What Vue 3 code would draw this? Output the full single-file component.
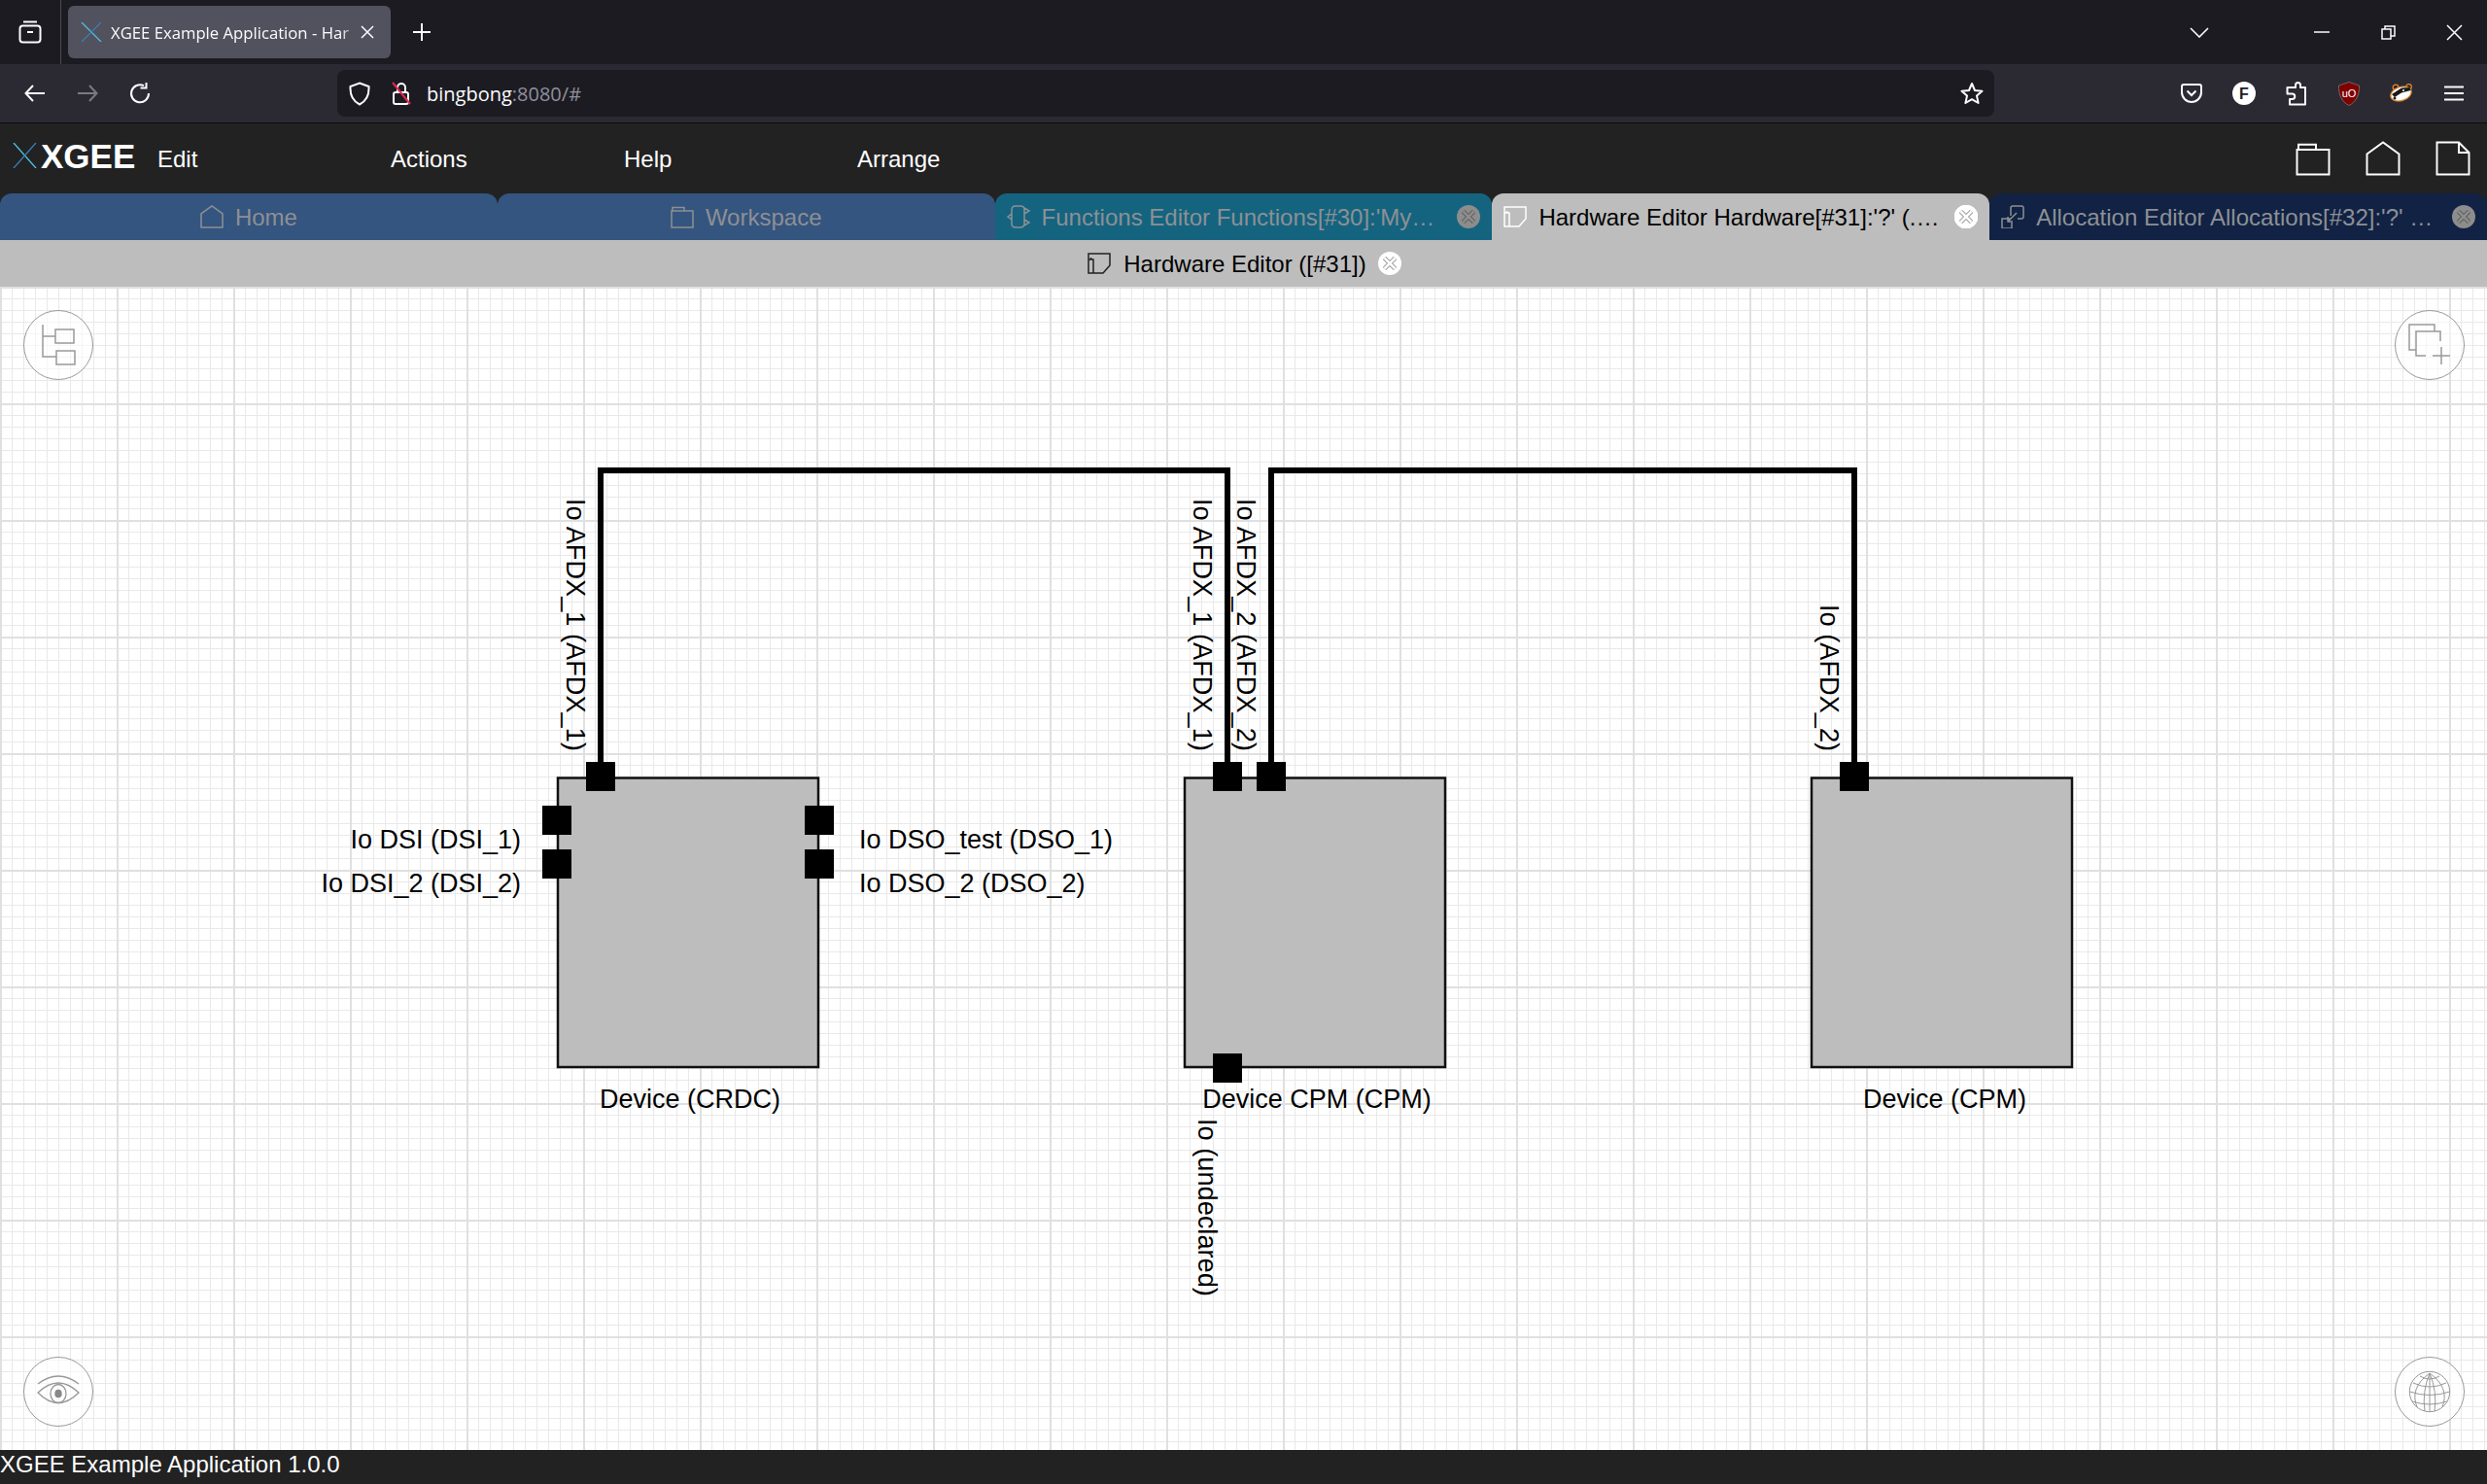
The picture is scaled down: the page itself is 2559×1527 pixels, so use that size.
<template>
  <div class="page">
    <!-- browser chrome: tab strip -->
    <div class="tabstrip">
      <div class="tablist-btn">
        <svg width="24" height="24" viewBox="0 0 24 24" fill="none" stroke="#fbfbfe" stroke-width="2">
          <path d="M5 1.5H19" />
          <rect x="1.5" y="5.5" width="21" height="17" rx="3" />
          <path d="M9 12H15" />
        </svg>
      </div>
      <div class="browser-tab">
        <svg class="favicon" width="22" height="20" viewBox="0 0 22 20" fill="none" stroke-width="1.2">
          <path d="M1 0L21 20" stroke="#4fc3e8" />
          <path d="M21 0L1 20" stroke="#3a7fb5" />
        </svg>
        <span class="browser-tab-title">XGEE Example Application - Har</span>
        <svg width="14" height="14" viewBox="0 0 14 14" stroke="#fbfbfe" stroke-width="1.5">
          <path d="M1 1L13 13M13 1L1 13" />
        </svg>
      </div>
      <div class="newtab-btn">
        <svg width="20" height="20" viewBox="0 0 20 20" stroke="#fbfbfe" stroke-width="2">
          <path d="M10 1V19M1 10H19" />
        </svg>
      </div>
      <div class="chevron-btn">
        <svg width="20" height="11" viewBox="0 0 20 11" fill="none" stroke="#fbfbfe" stroke-width="1.6">
          <path d="M1 1L10 10L19 1" />
        </svg>
      </div>
      <div class="window-btn">
        <svg width="16" height="2" viewBox="0 0 16 2" stroke="#fbfbfe" stroke-width="1.5"><path d="M0 1H16" /></svg>
      </div>
      <div class="window-btn">
        <svg width="15" height="15" viewBox="0 0 15 15" fill="none" stroke="#fbfbfe" stroke-width="1.5">
          <rect x="1" y="4" width="9" height="10" />
          <path d="M4 4V1H14V11H10" />
        </svg>
      </div>
      <div class="window-btn">
        <svg width="17" height="17" viewBox="0 0 17 17" stroke="#fbfbfe" stroke-width="1.5">
          <path d="M1 1L16 16M16 1L1 16" />
        </svg>
      </div>
    </div>

    <!-- browser chrome: url row -->
    <div class="toolbar">
      <div class="tool-btn">
        <svg width="22" height="18" viewBox="0 0 22 18" fill="none" stroke="#fbfbfe" stroke-width="2">
          <path d="M21 9H2M9 1L1.5 9L9 17" />
        </svg>
      </div>
      <div class="tool-btn">
        <svg width="22" height="18" viewBox="0 0 22 18" fill="none" stroke="#7b7a82" stroke-width="2">
          <path d="M1 9H20M13 1L20.5 9L13 17" />
        </svg>
      </div>
      <div class="tool-btn">
        <svg width="22" height="22" viewBox="0 0 22 22" fill="none" stroke="#fbfbfe" stroke-width="2">
          <path d="M15 3.2A9 9 0 1 0 20 11" />
          <path d="M15.5 0V6.5H9.5" fill="none" transform="translate(2 -1)" />
        </svg>
      </div>
      <div class="urlbar">
        <svg class="shield" width="22" height="25" viewBox="0 0 22 25" fill="none" stroke="#fbfbfe" stroke-width="2">
          <path d="M11 1.5L20.5 5C21 14 17 20.5 11 23.5C5 20.5 1 14 1.5 5Z" />
        </svg>
        <svg class="lock" width="20" height="24" viewBox="0 0 20 24" fill="none" stroke-width="2">
          <rect x="2" y="11" width="15" height="12" rx="2" stroke="#fbfbfe" />
          <path d="M6 11V6A4 4 0 0 1 14 6V11" stroke="#fbfbfe" />
          <path d="M1 1L19 23" stroke="#e22850" />
        </svg>
        <span class="url-host">bingbong</span><span class="url-rest">:8080/#</span>
        <svg class="star" width="24" height="24" viewBox="0 0 24 24" fill="none" stroke="#fbfbfe" stroke-width="2" stroke-linejoin="round">
          <path d="M12 2L15 9L22.5 9.7L17 14.6L18.6 22L12 18.2L5.4 22L7 14.6L1.5 9.7L9 9Z" />
        </svg>
      </div>
      <div class="tool-btn">
        <svg width="22" height="20" viewBox="0 0 22 20" fill="none" stroke="#fbfbfe" stroke-width="2">
          <path d="M3 1H19Q21 1 21 3V9A10 10 0 0 1 1 9V3Q1 1 3 1Z" />
          <path d="M6.5 7.5L11 12L15.5 7.5" />
        </svg>
      </div>
      <div class="tool-btn">
        <svg width="24" height="24" viewBox="0 0 24 24">
          <circle cx="12" cy="12" r="12" fill="#fff" />
          <text x="12" y="18" class="badge-f" text-anchor="middle">F</text>
        </svg>
      </div>
      <div class="tool-btn">
        <svg width="22" height="25" viewBox="0 0 22 25" fill="none" stroke="#fbfbfe" stroke-width="2" stroke-linejoin="round">
          <path d="M10 6V3.5A2.5 2.5 0 0 1 15 3.5V6H20V23.5H4V18H6.5A2.7 2.7 0 0 0 6.5 12.500H1.500V6Z" />
        </svg>
      </div>
      <div class="tool-btn">
        <svg width="22" height="25" viewBox="0 0 22 25">
          <path d="M11 0.5L21.500 4C22 14 18 21 11 24.500C4 21 0 14 0.500 4Z" fill="#800000" stroke="#777" stroke-width="0.8" />
          <text x="11" y="16" class="badge-ub" text-anchor="middle">uO</text>
        </svg>
      </div>
      <div class="tool-btn">
        <svg width="25" height="20" viewBox="0 0 25 20">
          <circle cx="7" cy="4" r="2.800" fill="#222" stroke="#e08a30" stroke-width="1.300" />
          <circle cx="20.500" cy="3.500" r="2.800" fill="#222" stroke="#e08a30" stroke-width="1.300" />
          <ellipse cx="12.500" cy="10.500" rx="11" ry="7" fill="#fff" stroke="#e08a30" stroke-width="1.200" transform="rotate(-18 12.500 10.500)" />
          <path d="M3 11L13 4.500L21.500 4L22.500 7L13 9.500L6 14Z" fill="#1a1a1a" />
          <circle cx="15" cy="7" r="1" fill="#fff" />
          <circle cx="6" cy="15" r="1.500" fill="#222" />
        </svg>
      </div>
      <div class="tool-btn">
        <svg width="20" height="16" viewBox="0 0 20 16" stroke="#fbfbfe" stroke-width="2">
          <path d="M0 1.500H20M0 8H20M0 14.500H20" />
        </svg>
      </div>
    </div>

    <!-- application menu -->
    <div class="menu-bar">
      <svg class="logo-x" width="25" height="26" viewBox="0 0 25 26" fill="none" stroke-width="1.3">
        <path d="M1 0L24 26" stroke="#4fc3e8" />
        <path d="M24 0L1 26" stroke="#3a7fb5" />
      </svg>
      <span class="logo-text">XGEE</span>
      <span v-for="item in menuItems" :key="item" class="menu-item">{{ item }}</span>
      <div class="menu-icons">
        <svg v-for="name in ['folder', 'home', 'file']" :key="name" width="36" height="36" viewBox="0 0 24 24" fill="none" stroke="#fff" stroke-width="1.300">
          <path :d="icons[name]" />
        </svg>
      </div>
    </div>

    <!-- editor tabs -->
    <div class="tabs">
      <div v-for="tab in tabs" :key="tab.title" class="tab" :class="tab.cls">
        <svg class="tab-icon" width="24" height="24" viewBox="0 0 24 24" fill="none" stroke="currentColor" stroke-width="1.500">
          <path :d="icons[tab.icon]" />
        </svg>
        <span class="tab-title">{{ tab.title }}</span>
        <svg v-if="tab.closable" class="tab-close" width="24" height="24" viewBox="0 0 24 24">
          <circle cx="12" cy="12" r="12" class="close-bg" />
          <path d="M6.500 6.500L17.500 17.500M17.500 6.500L6.500 17.500" class="close-outer" />
          <path d="M6.500 6.500L17.500 17.500M17.500 6.500L6.500 17.500" class="close-inner" />
        </svg>
      </div>
    </div>

    <!-- panel header -->
    <div class="panel-header">
      <svg class="panel-icon" width="24" height="24" viewBox="0 0 24 24" fill="none" stroke="#222" stroke-width="1.500">
        <path :d="icons.hardware" />
      </svg>
      <span class="panel-title">Hardware Editor ([#31])</span>
      <svg class="panel-close" width="24" height="24" viewBox="0 0 24 24">
        <circle cx="12" cy="12" r="12" fill="#fff" />
        <path d="M6.500 6.500L17.500 17.500M17.500 6.500L6.500 17.500" stroke="#888" stroke-width="4.500" />
        <path d="M6.500 6.500L17.500 17.500M17.500 6.500L6.500 17.500" stroke="#fff" stroke-width="2.800" />
      </svg>
    </div>

    <!-- graph canvas -->
    <div class="canvas">
      <svg class="graph" width="2559" height="1197" viewBox="0 295 2559 1197">
        <path v-for="wire in wires" :key="wire" :d="wire" class="wire" />
        <rect v-for="d in devices" :key="d.label" :x="d.x" y="800.500" width="268" height="297.500" class="device" />
        <rect v-for="p in ports" :key="p.x + '-' + p.y" :x="p.x" :y="p.y" width="30" height="30" class="port" />
        <text v-for="d in devices" :key="d.label" :x="d.labelX" y="1140" class="label" text-anchor="middle">{{ d.label }}</text>
        <text v-for="l in portLabels" :key="l.text" :x="l.x" :y="l.y" class="label" :text-anchor="l.anchor">{{ l.text }}</text>
        <text
          v-for="l in verticalLabels"
          :key="l.text + l.x"
          :x="l.x"
          :y="l.y"
          class="label label-vertical"
          :transform="`rotate(90 ${l.x} ${l.y})`"
        >{{ l.text }}</text>
      </svg>

      <div class="round-btn btn-outline">
        <svg width="72" height="72" viewBox="0 0 72 72" fill="none" stroke="#999" stroke-width="1.500">
          <path d="M20 15V48H34M20 27H33" />
          <rect x="33" y="20" width="19" height="14" />
          <rect x="34" y="42" width="19" height="14" />
        </svg>
      </div>
      <div class="round-btn btn-copy">
        <svg width="72" height="72" viewBox="0 0 72 72" fill="none" stroke="#999" stroke-width="1.500">
          <path d="M22 41H15V15H41V22" />
          <path d="M47 32V22H22V47H32M39 47H57M48 38V56" />
        </svg>
      </div>
      <div class="round-btn btn-eye">
        <svg width="72" height="72" viewBox="0 0 72 72" fill="none" stroke="#999" stroke-width="1.300">
          <path d="M15 28Q36 12 57 28" />
          <path d="M15 37Q36 17 57 37Q36 58 15 37Z" />
          <ellipse cx="36" cy="38" rx="8" ry="9.500" />
          <ellipse cx="36" cy="38" rx="3.700" ry="4.300" fill="#888" stroke="none" />
        </svg>
      </div>
      <div class="round-btn btn-globe">
        <svg width="72" height="72" viewBox="-36 -36 72 72" fill="none" stroke="#999" stroke-width="1">
          <circle r="20.700" />
          <path d="M0 -19V20" />
          <path d="M0 -19Q-8 0 -5 20M0 -19Q8 0 5 20" />
          <path d="M0 -19Q-21 -4 -13 16M0 -19Q21 -4 13 16" />
          <path d="M-10 -16Q0 -10 10 -16M-17 -9Q0 -1 17 -9M-20.500 0Q0 7 20.500 0M-18 10Q0 16 18 10" />
        </svg>
      </div>
    </div>

    <div class="status-bar">XGEE Example Application 1.0.0</div>
  </div>
</template>

<script setup>
const menuItems = ['Edit', 'Actions', 'Help', 'Arrange']

// paths for the small line icons, all on a 24x24 box
const icons = {
  home: 'M1 23V9L12 1L23 9V23Z',
  folder: 'M1 6H23V23H1ZM2 6V2.500H14V6',
  file: 'M1 1H16L23 8V23H1ZM16 1V8H23',
  functions: 'M9 1H14Q18 1 18 5V19Q18 23 14 23H9Q5 23 5 19V5Q5 1 9 1ZM5 9L1 12L5 15M18 3L23 6L18 9M18 15L23 18L18 21',
  hardware: 'M1 2H23V14L16 22H1ZM1 8H6V22M3.500 8V6',
  allocation: 'M10 11V3Q10 1 12 1H21Q23 1 23 3V12Q23 14 21 14H17M10 14H1V24H11V18M16 8L7 17M7 12V17H12',
}

const tabs = [
  { title: 'Home', icon: 'home', cls: 'tab-home' },
  { title: 'Workspace', icon: 'folder', cls: 'tab-home' },
  { title: "Functions Editor Functions[#30]:'My…", icon: 'functions', cls: 'tab-functions', closable: true },
  { title: "Hardware Editor Hardware[#31]:'?' (.…", icon: 'hardware', cls: 'tab-active', closable: true },
  { title: "Allocation Editor Allocations[#32]:'?' …", icon: 'allocation', cls: 'tab-allocation', closable: true },
]

// diagram content, coordinates are page pixels
const devices = [
  { x: 574, labelX: 710, label: 'Device (CRDC)' },
  { x: 1219, labelX: 1355, label: 'Device CPM (CPM)' },
  { x: 1864, labelX: 2001, label: 'Device (CPM)' },
]

const wires = ['M618 790V484H1263V790', 'M1308 790V484H1908V790']

const ports = [
  { x: 603, y: 784 },
  { x: 558, y: 829 },
  { x: 558, y: 874 },
  { x: 828, y: 829 },
  { x: 828, y: 874 },
  { x: 1248, y: 784 },
  { x: 1293, y: 784 },
  { x: 1248, y: 1084 },
  { x: 1893, y: 784 },
]

const portLabels = [
  { text: 'Io DSI (DSI_1)', x: 536, y: 873, anchor: 'end' },
  { text: 'Io DSI_2 (DSI_2)', x: 536, y: 918, anchor: 'end' },
  { text: 'Io DSO_test (DSO_1)', x: 884, y: 873, anchor: 'start' },
  { text: 'Io DSO_2 (DSO_2)', x: 884, y: 918, anchor: 'start' },
]

const verticalLabels = [
  { text: 'Io AFDX_1 (AFDX_1)', x: 583, y: 513 },
  { text: 'Io AFDX_1 (AFDX_1)', x: 1228, y: 513 },
  { text: 'Io AFDX_2 (AFDX_2)', x: 1273, y: 513 },
  { text: 'Io (AFDX_2)', x: 1873, y: 622 },
  { text: 'Io (undeclared)', x: 1233, y: 1151 },
]
</script>

<style>
html,
body {
  margin: 0;
  background: #222;
}
</style>

<style scoped>
.page {
  display: flex;
  flex-direction: column;
  height: 100vh;
  overflow: hidden;
  font-family: "Liberation Sans", Arial, sans-serif;
}

.tabstrip {
  display: flex;
  align-items: center;
  height: 66px;
  flex: none;
  background: #1c1b22;
}
.tablist-btn {
  display: flex;
  align-items: center;
  justify-content: center;
  width: 62px;
  height: 66px;
  border-right: 1px solid #4a4a52;
}
.browser-tab {
  display: flex;
  align-items: center;
  width: 332px;
  height: 54px;
  margin-left: 7px;
  padding: 0 17px 0 13px;
  box-sizing: border-box;
  border-radius: 6px;
  background: #52525e;
}
.favicon {
  flex: none;
  margin-right: 9px;
}
.browser-tab-title {
  flex: 1;
  min-width: 0;
  white-space: nowrap;
  font-family: "Open Sans", sans-serif;
  font-size: 16.700px;
  color: #fbfbfe;
  -webkit-mask-image: linear-gradient(to right, #000 92%, transparent);
  mask-image: linear-gradient(to right, #000 92%, transparent);
}
.newtab-btn {
  display: flex;
  justify-content: center;
  width: 64px;
}
.chevron-btn {
  display: flex;
  justify-content: center;
  width: 40px;
  margin-left: auto;
  margin-right: 71px;
}
.window-btn {
  display: flex;
  justify-content: center;
  width: 69px;
}
.window-btn:last-child {
  width: 67px;
}

.toolbar {
  display: flex;
  align-items: center;
  height: 60px;
  flex: none;
  padding: 0 7.500px 0 9px;
  background: #2b2a33;
  border-bottom: 1px solid #0c0c0d;
}
.tool-btn {
  display: flex;
  align-items: center;
  justify-content: center;
  width: 54px;
  flex: none;
}
.urlbar {
  display: flex;
  align-items: center;
  flex: 1;
  height: 48px;
  margin: 0 175.500px 0 176px;
  padding: 0 11px 0 12px;
  border-radius: 8px;
  background: #1c1b22;
  font-family: "Open Sans", sans-serif;
  font-size: 20px;
}
.shield {
  margin-right: 22px;
}
.lock {
  margin-right: 16px;
}
.url-host {
  color: #fbfbfe;
}
.url-rest {
  color: #8f8f9d;
}
.star {
  margin-left: auto;
}
.badge-f {
  font: bold 16px "Liberation Sans", sans-serif;
  fill: #1c1b22;
}
.badge-ub {
  font: 11px "Liberation Sans", sans-serif;
  fill: #fff;
}

.menu-bar {
  display: flex;
  align-items: center;
  height: 72px;
  flex: none;
  padding: 0 17px 0 13px;
  background: #222;
  color: #fff;
}
.logo-x {
  flex: none;
  margin: -6px 4px 0 0;
}
.logo-text {
  width: 120px;
  margin-top: -4px;
  font-size: 35px;
  font-weight: bold;
}
.menu-item {
  width: 240px;
  padding-top: 1px;
  font-size: 24px;
}
.menu-icons {
  display: flex;
  gap: 36px;
  margin-left: auto;
}

.tabs {
  display: flex;
  height: 48px;
  flex: none;
  background: #222;
}
.tab {
  display: flex;
  flex: 1;
  min-width: 0;
  align-items: center;
  gap: 12px;
  padding: 0 12px;
  border-radius: 12px 12px 0 0;
  font-size: 24px;
  color: #8d9094;
  white-space: nowrap;
}
.tab-title {
  flex: 1;
  min-width: 0;
  padding-top: 2px;
  overflow: hidden;
}
.tab-home {
  justify-content: center;
  background: #34557f;
}
.tab-home .tab-title {
  flex: none;
}
.tab-functions {
  background: #146480;
}
.tab-active {
  background: #bdbdbd;
  color: #000;
}
.tab-active .tab-icon {
  color: #fff;
}
.tab-allocation {
  background: #112244;
}
.close-bg {
  fill: #8d8d8d;
}
.close-outer {
  stroke: #555;
  stroke-width: 4.500;
}
.close-inner {
  stroke: #8d8d8d;
  stroke-width: 2.800;
}
.tab-active .close-bg,
.tab-active .close-inner {
  fill: #fff;
  stroke: #fff;
}
.tab-active .close-outer {
  stroke: #888;
}

.panel-header {
  display: flex;
  align-items: center;
  justify-content: center;
  height: 48px;
  flex: none;
  gap: 13px;
  background: #bdbdbd;
  font-size: 24px;
  color: #000;
}
.panel-icon {
  margin-left: 2px;
}
.panel-title {
  padding-top: 2px;
}
.panel-close {
  margin-left: -1px;
}

.canvas {
  position: relative;
  flex: 1;
  min-height: 0;
  background-color: #fff;
  background-image:
    linear-gradient(to right, #e0e0e0 2px, transparent 2px),
    linear-gradient(to bottom, #e0e0e0 2px, transparent 2px),
    linear-gradient(to right, #e9e9e9 1px, transparent 1px),
    linear-gradient(to bottom, #e9e9e9 1px, transparent 1px);
  background-size: 120px 120px, 120px 120px, 12px 12px, 12px 12px;
}
.graph {
  position: absolute;
  left: 0;
  top: 0;
}
.wire {
  fill: none;
  stroke: #000;
  stroke-width: 6;
}
.device {
  fill: #bdbdbd;
  stroke: #111;
  stroke-width: 2.500;
}
.port {
  fill: #000;
}
.label {
  font-family: "Liberation Sans", Arial, sans-serif;
  font-size: 27px;
  fill: #000;
}
.label-vertical {
  font-size: 27.200px;
}

.round-btn {
  position: absolute;
  width: 72px;
  height: 72px;
  border: 1px solid #999;
  border-radius: 50%;
  box-sizing: border-box;
  background: rgba(255, 255, 255, 0.55);
}
.round-btn svg {
  display: block;
  margin: -1px;
}
.btn-outline {
  left: 24px;
  top: 24px;
}
.btn-copy {
  right: 23px;
  top: 24px;
}
.btn-eye {
  left: 24px;
  bottom: 24px;
}
.btn-globe {
  right: 23px;
  bottom: 24px;
}

.status-bar {
  height: 35px;
  flex: none;
  background: #222;
  color: #fff;
  font-size: 24px;
  line-height: 30px;
}
</style>
